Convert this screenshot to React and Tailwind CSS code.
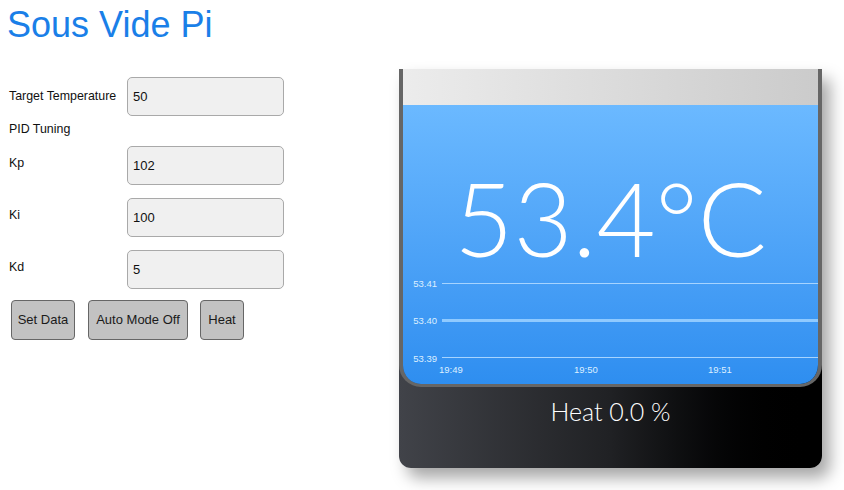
import React, { useState } from 'react';

const Field = ({ label, name, value, onChange, className = '', labelClass = '' }) => (
  <div className={`flex items-center ${className}`}>
    <span className={`w-[118px] text-[12.4px] text-[#111] ${labelClass}`}>{label}</span>
    <input
      name={name}
      value={value}
      onChange={onChange}
      className="w-[157px] h-[39px] rounded-[5px] border border-[#a9a9a9] bg-[#f0f0f0] px-[5px] text-[13px] text-[#111] outline-none"
    />
  </div>
);

const Chart = () => (
  <svg width="415" height="116" className="block" fontFamily="'Liberation Sans', Arial, sans-serif">
    <line x1="39" y1="15.5" x2="415" y2="15.5" stroke="#a6d4ff" strokeWidth="1" />
    <line x1="39" y1="52.5" x2="415" y2="52.5" stroke="#8fcaff" strokeWidth="3" />
    <line x1="39" y1="89.5" x2="415" y2="89.5" stroke="#a6d4ff" strokeWidth="1" />
    <g fill="#dcefff" fontSize="9.5">
      <text x="34" y="18.5" textAnchor="end">53.41</text>
      <text x="34" y="55.5" textAnchor="end">53.40</text>
      <text x="34" y="93.5" textAnchor="end">53.39</text>
      <text x="36" y="104.5">19:49</text>
      <text x="171" y="104.5">19:50</text>
      <text x="305" y="104.5">19:51</text>
    </g>
  </svg>
);

const buttons = [
  { label: 'Set Data', w: 'w-[64px]' },
  { label: 'Auto Mode Off', w: 'w-[100px] ml-[13px]' },
  { label: 'Heat', w: 'w-[44px] ml-[12px]' },
];

const App = () => {
  const [form, setForm] = useState({ target: '50', kp: '102', ki: '100', kd: '5' });

  const handleChange = (e) => {
    const { name, value } = e.target;
    setForm((prev) => ({ ...prev, [name]: value }));
  };

  return (
    <div className="w-[844px] h-[490px] overflow-hidden bg-white font-['Liberation_Sans',Arial,sans-serif]">
      <h1 className="pl-[7px] pt-[7px] text-[36px] leading-none text-[#1a7fe8] font-normal">Sous Vide Pi</h1>

      <div className="flex mt-[26px]">
        {/* settings form */}
        <div className="w-[399px] pt-[8px] pl-[9px]">
          <Field label="Target Temperature" name="target" value={form.target} onChange={handleChange} />
          <div className="h-[30px] pt-[6px] text-[12.4px] leading-[14px] text-[#111]">PID Tuning</div>
          <Field label="Kp" name="kp" value={form.kp} onChange={handleChange} labelClass="pb-[4px]" />
          <Field label="Ki" name="ki" value={form.ki} onChange={handleChange} labelClass="pb-[4px]" className="mt-[13px]" />
          <Field label="Kd" name="kd" value={form.kd} onChange={handleChange} labelClass="pb-[4px]" className="mt-[13px]" />
          <div className="flex mt-[11px] ml-[2px]">
            {buttons.map((b) => (
              <button
                key={b.label}
                type="button"
                className={`${b.w} h-[40px] rounded-[4px] border border-[#666] bg-[#c2c2c2] text-[13px] text-[#1a1a1a] whitespace-nowrap`}
              >
                {b.label}
              </button>
            ))}
          </div>
        </div>

        {/* display card */}
        <div className="w-[423px] h-[399px] rounded-b-[12px] bg-gradient-to-r from-[#414349] via-[#202124] to-[#000] shadow-[8px_10px_16px_rgba(0,0,0,0.35)]">
          <div className="h-[318px] border-x-4 border-b-[3px] border-[#666] rounded-b-[22px] overflow-hidden flex flex-col">
            <div className="h-[36px] shrink-0 bg-gradient-to-r from-[#ececec] to-[#cbcbcb]" />
            <div className="flex-1 bg-gradient-to-b from-[#6bb9ff] to-[#2e8ef0] flex flex-col">
              <div className="pt-[62px] h-[163px] text-center text-white text-[102px] leading-none font-light font-['Lato',sans-serif]">
                53.4°C
              </div>
              <Chart />
            </div>
          </div>
          <div className="pt-[12px] text-center text-white text-[25px] leading-none font-light font-['Lato',sans-serif]">
            Heat 0.0 %
          </div>
        </div>
      </div>
    </div>
  );
};

export default App;
